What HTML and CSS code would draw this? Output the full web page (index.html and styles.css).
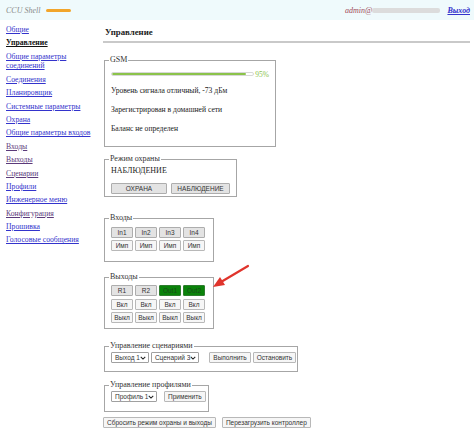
FILE: index.html
```html
<!DOCTYPE html>
<html lang="ru">
<head>
<meta charset="utf-8">
<title>CCU Shell</title>
<link rel="stylesheet" href="styles.css">
</head>
<body>
<div class="topbar">
  <div class="brand"><span class="brand-name">CCU Shell</span><span class="brand-bar"></span></div>
  <div class="user"><span class="user-name">admin@</span><span class="user-blur"></span><a class="logout" href="#">Выход</a></div>
</div>
<div class="page">
  <nav class="sidebar">
    <a class="nav" href="#">Общие</a>
    <span class="nav current">Управление</span>
    <a class="nav" href="#">Общие параметры<br>соединений</a>
    <a class="nav" href="#">Соединения</a>
    <a class="nav" href="#">Планировщик</a>
    <a class="nav" href="#">Системные параметры</a>
    <a class="nav" href="#">Охрана</a>
    <a class="nav" href="#">Общие параметры входов</a>
    <a class="nav visited" href="#">Входы</a>
    <a class="nav visited" href="#">Выходы</a>
    <a class="nav visited" href="#">Сценарии</a>
    <a class="nav" href="#">Профили</a>
    <a class="nav" href="#">Инженерное меню</a>
    <a class="nav visited" href="#">Конфигурация</a>
    <a class="nav" href="#">Прошивка</a>
    <a class="nav" href="#">Голосовые сообщения</a>
  </nav>
  <main class="main">
    <h1 class="title">Управление</h1>

    <fieldset class="box box-gsm">
      <legend>GSM</legend>
      <div class="signal">
        <div class="track"><div class="fill" style="width:95%"></div></div>
        <span class="pct">95%</span>
      </div>
      <p class="line">Уровень сигнала отличный, -73 дБм</p>
      <p class="line">Зарегистрирован в домашней сети</p>
      <p class="line">Баланс не определен</p>
    </fieldset>

    <fieldset class="box box-mode">
      <legend>Режим охраны</legend>
      <p class="mode">НАБЛЮДЕНИЕ</p>
      <div class="row">
        <button class="btn btn-mode1">ОХРАНА</button>
        <button class="btn btn-mode2">НАБЛЮДЕНИЕ</button>
      </div>
    </fieldset>

    <fieldset class="box box-in">
      <legend>Входы</legend>
      <div class="grid">
        <button class="btn cell">In1</button>
        <button class="btn cell">In2</button>
        <button class="btn cell">In3</button>
        <button class="btn cell">In4</button>
        <button class="btn cell light">Имп</button>
        <button class="btn cell light">Имп</button>
        <button class="btn cell light">Имп</button>
        <button class="btn cell light">Имп</button>
      </div>
    </fieldset>

    <fieldset class="box box-out">
      <legend>Выходы</legend>
      <div class="grid grid-out">
        <button class="btn cell">R1</button>
        <button class="btn cell">R2</button>
        <button class="btn cell on">Out1</button>
        <button class="btn cell on">Out2</button>
        <button class="btn cell light">Вкл</button>
        <button class="btn cell light">Вкл</button>
        <button class="btn cell light">Вкл</button>
        <button class="btn cell light">Вкл</button>
        <button class="btn cell light">Выкл</button>
        <button class="btn cell light">Выкл</button>
        <button class="btn cell light">Выкл</button>
        <button class="btn cell light">Выкл</button>
      </div>
    </fieldset>

    <fieldset class="box box-scen">
      <legend>Управление сценариями</legend>
      <div class="row">
        <span class="select sel-out">Выход 1<svg class="chev" viewBox="0 0 8 5"><path d="M1 1l3 3 3-3" fill="none" stroke="#222" stroke-width="1.4"/></svg></span>
        <span class="select sel-scen">Сценарий 3<svg class="chev" viewBox="0 0 8 5"><path d="M1 1l3 3 3-3" fill="none" stroke="#222" stroke-width="1.4"/></svg></span>
        <button class="btn light btn-run">Выполнить</button>
        <button class="btn light">Остановить</button>
      </div>
    </fieldset>

    <fieldset class="box box-prof">
      <legend>Управление профилями</legend>
      <div class="row">
        <span class="select sel-prof">Профиль 1<svg class="chev" viewBox="0 0 8 5"><path d="M1 1l3 3 3-3" fill="none" stroke="#222" stroke-width="1.4"/></svg></span>
        <button class="btn light btn-apply">Применить</button>
      </div>
    </fieldset>

    <div class="row bottom">
      <button class="btn light">Сбросить режим охраны и выходы</button>
      <button class="btn light btn-reboot">Перезагрузить контроллер</button>
    </div>
  </main>
</div>
<svg class="arrow" width="60" height="30" viewBox="0 0 60 30">
  <line x1="40" y1="4" x2="13" y2="20" stroke="#e0342c" stroke-width="2.2" stroke-linecap="round"/>
  <path d="M5 25 L12 15 L17 23 Z" fill="#e0342c"/>
</svg>
</body>
</html>
```

FILE: styles.css
```css
html, body {
  margin: 0;
  padding: 0;
  background: #fff;
}
body {
  position: relative;
  font-family: "Liberation Serif", "Times New Roman", serif;
  font-size: 8px;
  color: #222;
}

.topbar {
  height: 20px;
  background: #effafc;
  display: flex;
  align-items: center;
  justify-content: space-between;
  padding: 0 4px 0 6px;
}
.brand {
  display: flex;
  align-items: center;
  gap: 6px;
}
.brand-name {
  font-style: italic;
  color: #8a8a8a;
  font-size: 8px;
}
.brand-bar {
  width: 25px;
  height: 3px;
  border-radius: 2px;
  background: #f2a52b;
}
.user {
  display: flex;
  align-items: center;
  font-style: italic;
  font-size: 8px;
}
.user-name {
  color: #a04a5a;
}
.user-blur {
  width: 68px;
  height: 5px;
  background: #dcdcdc;
  border-radius: 2px;
  margin-right: 7px;
}
.logout {
  color: #3333cc;
  font-style: italic;
  font-weight: bold;
}

.page {
  display: flex;
}
.sidebar {
  width: 103px;
  flex: none;
  box-sizing: border-box;
  padding: 5px 0 0 6px;
  display: flex;
  flex-direction: column;
  align-items: flex-start;
  font-size: 7.7px;
  line-height: 9.6px;
}
.nav {
  color: #3333cc;
  margin-bottom: 3.8px;
  white-space: nowrap;
}
.nav.visited {
  color: #5b3a7a;
}
.nav.current {
  color: #111;
  font-weight: bold;
  text-decoration: underline;
}

.main {
  flex: 1;
  min-width: 0;
  padding-right: 4px;
  display: flex;
  flex-direction: column;
  align-items: flex-start;
}
.title {
  align-self: stretch;
  margin: 6px 0 0 0;
  padding: 0 0 3px 2px;
  font-size: 8.8px;
  line-height: 12px;
  font-weight: bold;
  border-bottom: 2px solid #c9c9c9;
}

.box {
  box-sizing: border-box;
  margin: 0 0 0 1px;
  border: 1px solid #a6a6a6;
  padding: 0 6px 0 6px;
  min-inline-size: 0;
}
.box legend {
  padding: 0 1px;
  font-size: 8px;
  line-height: 8px;
  margin-left: -2px;
  color: #333;
}
.box-gsm {
  width: 172px;
  margin-top: 13px;
  padding-top: 7px;
  padding-bottom: 12px;
}
.box-mode {
  width: 133px;
  margin-top: 8px;
  padding-bottom: 2px;
}
.box-in {
  width: 110px;
  margin-top: 17px;
  padding-top: 5px;
  padding-bottom: 10px;
}
.box-out {
  width: 110px;
  margin-top: 11px;
  padding-top: 4px;
  padding-bottom: 5px;
}
.box-scen {
  width: 194px;
  margin-top: 13px;
  padding-top: 2px;
  padding-bottom: 8px;
}
.box-prof {
  width: 105px;
  margin-top: 9px;
  padding-top: 2px;
  padding-bottom: 9px;
}

.signal {
  display: flex;
  align-items: center;
  height: 6px;
}
.track {
  width: 147px;
  height: 4px;
  border: 1px solid #d7d7d7;
  border-radius: 3px;
  box-sizing: border-box;
  overflow: hidden;
  background: #fff;
}
.fill {
  height: 100%;
  background: #8bc34a;
  border-radius: 2px;
}
.pct {
  color: #8bc34a;
  font-size: 7.5px;
  margin-left: 1px;
}
.line {
  margin: 9px 0 0 0;
  font-size: 7.6px;
  line-height: 10px;
}

.mode {
  margin: 3px 0 7px 0;
  font-size: 8px;
  line-height: 10px;
}

.row {
  display: flex;
  align-items: center;
  gap: 2px;
}
.btn {
  box-sizing: border-box;
  height: 11px;
  padding: 0 3px;
  margin: 0;
  white-space: nowrap;
  font-family: "Liberation Sans", Arial, sans-serif;
  font-size: 6.5px;
  line-height: 9px;
  color: #333;
  background: #e3e3e3;
  border: 1px solid #adadad;
  border-radius: 1px;
}
.btn.light {
  background: #f6f6f6;
  border-color: #b8b8b8;
}
.btn.on {
  background: #0a830a;
  border-color: #2e7d2e;
  color: #1b4a1b;
}
.btn-mode1 {
  width: 56px;
}
.btn-mode2 {
  width: 59px;
  margin-left: 2px;
}

.grid {
  display: grid;
  grid-template-columns: repeat(4, 22px);
  gap: 2px 2px;
}
.grid-out {
  row-gap: 2.5px;
}
.cell {
  width: 22px;
  padding: 0;
}

.select {
  box-sizing: border-box;
  height: 11px;
  display: inline-flex;
  align-items: center;
  justify-content: space-between;
  white-space: nowrap;
  padding: 0 2px 0 3px;
  font-family: "Liberation Sans", Arial, sans-serif;
  font-size: 6.5px;
  color: #333;
  background: #fff;
  border: 1px solid #a0a0a0;
  border-radius: 1px;
}
.sel-out {
  width: 38px;
}
.sel-scen {
  width: 52px;
}
.sel-prof {
  width: 46px;
}
.chev {
  width: 6px;
  height: 4px;
  flex: none;
}
.btn-run {
  margin-left: 8px;
}
.btn-apply {
  margin-left: 5px;
}

.bottom {
  margin-top: 5px;
}
.btn-reboot {
  margin-left: 4px;
}

.arrow {
  position: absolute;
  left: 208px;
  top: 262px;
}
```
